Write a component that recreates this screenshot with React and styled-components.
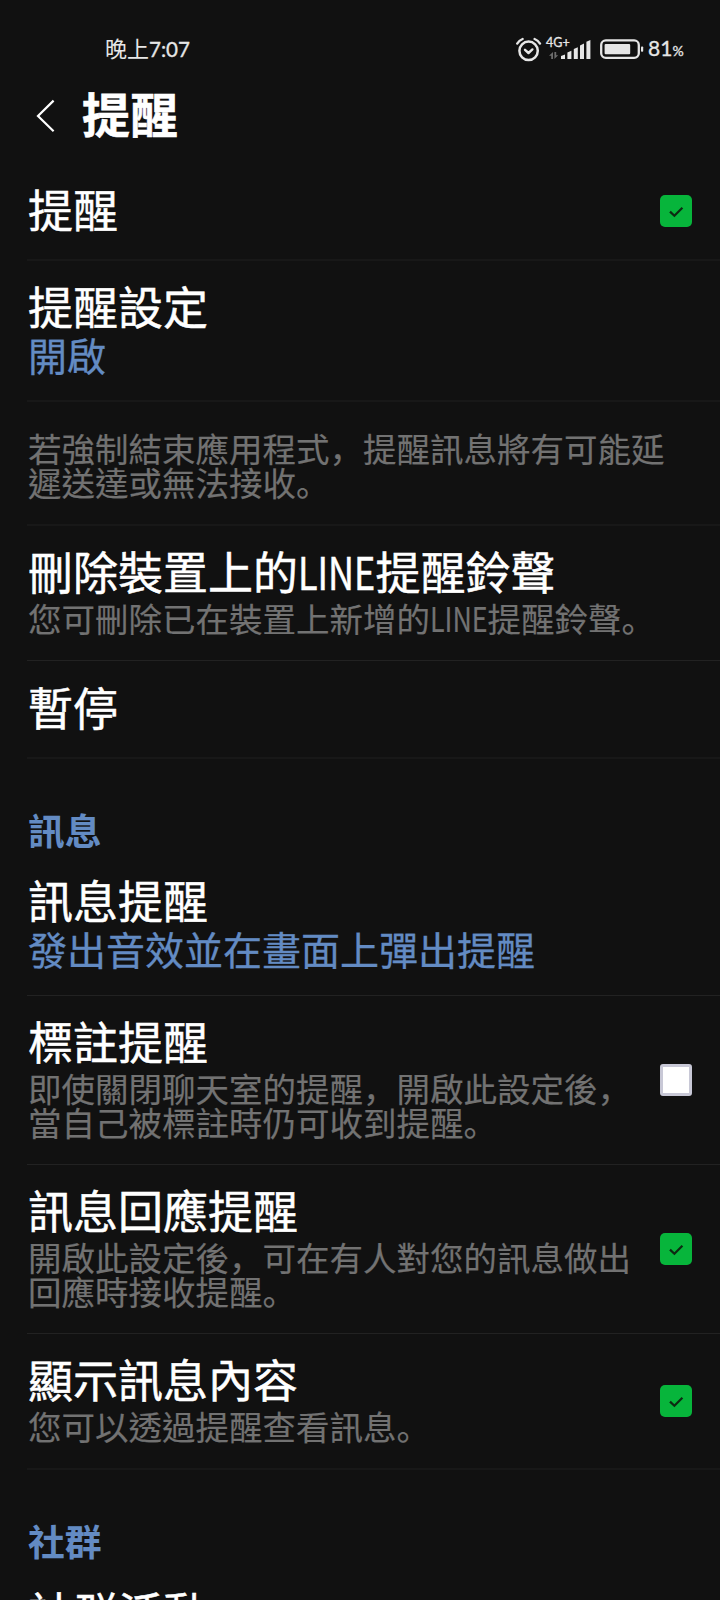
import { Fragment } from "react"
import styled, { createGlobalStyle, css } from "styled-components"

const messageRows = [
  {
    title: "訊息提醒",
    value: "發出音效並在畫面上彈出提醒",
    height: 141,
    thin: true,
  },
  {
    title: "標註提醒",
    desc: ["即使關閉聊天室的提醒，開啟此設定後，", "當自己被標註時仍可收到提醒。"],
    checked: false,
    height: 169,
    thin: true,
  },
  {
    title: "訊息回應提醒",
    desc: ["開啟此設定後，可在有人對您的訊息做出", "回應時接收提醒。"],
    checked: true,
    height: 169,
    thin: true,
  },
  {
    title: "顯示訊息內容",
    desc: ["您可以透過提醒查看訊息。"],
    checked: true,
    height: 136,
  },
]

// LINE is set narrow, punctuation sits at the lower left of its cell
const Mixed = ({ text, latin }) =>
  text.split(/(LINE|[，。])/).map((part, i) => {
    if (part === "LINE") {
      return (
        <StyledLatin key={i} $width={latin}>
          <span>{part}</span>
        </StyledLatin>
      )
    }
    if (part === "，" || part === "。") return <StyledMark key={i}>{part}</StyledMark>
    return <Fragment key={i}>{part}</Fragment>
  })

const Checkbox = ({ checked }) => (
  <StyledCheckbox $checked={checked} role="checkbox" aria-checked={checked}>
    {checked && (
      <svg width="32" height="32" viewBox="0 0 32 32" fill="none">
        <path d="M10 16.6L14.4 20.8L22.4 12.8" stroke="#0d2a12" strokeWidth="2.2" />
      </svg>
    )}
  </StyledCheckbox>
)

const SettingRow = ({ title, value, desc, checked, height, thin }) => (
  <StyledRow $height={height} $thin={thin}>
    <StyledRowText $single={!value && !desc}>
      <StyledTitle>
        <Mixed text={title} latin={77.5} />
      </StyledTitle>
      {value && <StyledValue>{value}</StyledValue>}
      {desc && desc.map((line) => (
        <StyledDesc key={line}>
          <Mixed text={line} latin={57.5} />
        </StyledDesc>
      ))}
    </StyledRowText>
    {checked !== undefined && <Checkbox checked={checked} />}
  </StyledRow>
)

const AlarmIcon = () => (
  <svg width="26" height="26" viewBox="0 0 26 26" fill="none" stroke="#e6e6e6" strokeLinecap="round">
    <circle cx="12.6" cy="14.8" r="9.2" strokeWidth="2.5" />
    <path d="M9 13.8L12.5 17L16.4 13.4" strokeWidth="2.4" strokeLinejoin="round" />
    <path d="M1.2 7.6Q3 4.4 6.6 3M24 7.6Q22.2 4.4 18.6 3" strokeWidth="2.3" />
  </svg>
)

const SignalIcon = () => (
  <svg width="44" height="22" viewBox="0 0 44 22" fill="#e6e6e6">
    <path d="M6 14v7H4.2v-3.2H2zM7.4 14v7l3.8-3.8H9.2V14z" fill="#6c6c6c" />
    <path d="M14 21v-3l4-1.6V21zM20.4 21v-6.4l4-1.8V21zM26.8 21V11l4-1.8V21zM33 21V7.4l4-1.8V21zM39.4 21V3.8l4-1.8V21z" />
  </svg>
)

const BatteryIcon = () => (
  <svg width="44" height="20" viewBox="0 0 44 20" fill="none">
    <rect x="1.2" y="1.4" width="37.6" height="17.4" rx="4.6" stroke="#e6e6e6" strokeWidth="2.3" />
    <rect x="4.6" y="5" width="25.6" height="10.2" rx="1" fill="#e6e6e6" />
    <rect x="41" y="7.4" width="2.2" height="5.4" rx="0.8" fill="#e6e6e6" />
  </svg>
)

export default function App() {
  return (
    <>
      <GlobalStyle />
      <StyledScreen>
        <StyledStatusBar>
          <StyledClock>
            晚上<span>7:07</span>
          </StyledClock>
          <StyledStatusIcons>
            <AlarmIcon />
            <StyledSignal>
              <SignalIcon />
              <StyledNetwork>4G+</StyledNetwork>
            </StyledSignal>
            <BatteryIcon />
            <StyledPercent>
              81<small>%</small>
            </StyledPercent>
          </StyledStatusIcons>
        </StyledStatusBar>

        <StyledHeader>
          <svg width="20" height="34" viewBox="0 0 20 34" fill="none">
            <path d="M17.6 1.6L2 17L17.6 32.2" stroke="#fff" strokeWidth="2.2" />
          </svg>
          <h1>提醒</h1>
        </StyledHeader>

        <SettingRow title="提醒" checked height={98} />
        <SettingRow title="提醒設定" value="開啟" height={141} />
        <StyledNotice>
          <StyledDesc><Mixed text="若強制結束應用程式，提醒訊息將有可能延" /></StyledDesc>
          <StyledDesc><Mixed text="遲送達或無法接收。" /></StyledDesc>
        </StyledNotice>
        <SettingRow
          title="刪除裝置上的LINE提醒鈴聲"
          desc={["您可刪除已在裝置上新增的LINE提醒鈴聲。"]}
          height={135}
          thin
        />
        <SettingRow title="暫停" height={98} />

        <StyledSection>訊息</StyledSection>
        {messageRows.map((row) => (
          <SettingRow key={row.title} {...row} />
        ))}

        <StyledSection>社群</StyledSection>
        <SettingRow title="社群活動" height={98} />
      </StyledScreen>
    </>
  )
}

const GlobalStyle = createGlobalStyle`
  * {
    box-sizing: border-box;
  }

  body {
    margin: 0;
    background-color: #111;
    overflow: hidden;
  }
`

const StyledScreen = styled.div`
  width: 720px;
  height: 1600px;
  overflow: hidden;
  background-color: #111;
  color: #fff;
  font-family: "Noto Sans CJK TC", sans-serif;
  white-space: nowrap;

  svg {
    display: block;
    flex-shrink: 0;
  }
`

const StyledStatusBar = styled.div`
  height: 84px;
  padding: 14px 35px 0 105px;
  display: flex;
  align-items: center;
  justify-content: space-between;
  color: #e6e6e6;
`

const StyledClock = styled.div`
  padding-bottom: 2px;
  font-size: 22px;
  line-height: 26px;

  span {
    font-family: Lato, sans-serif;
    font-size: 20.6px;
    -webkit-text-stroke: 0.3px currentColor;
  }
`

const StyledStatusIcons = styled.div`
  display: flex;
  align-items: center;
`

const StyledSignal = styled.div`
  position: relative;
  margin: 0 9px 0 5px;
`

const StyledNetwork = styled.span`
  position: absolute;
  top: -2px;
  left: -1px;
  font-family: Lato, sans-serif;
  font-size: 12.5px;
  line-height: 14px;
  -webkit-text-stroke: 0.3px currentColor;
`

const StyledPercent = styled.div`
  width: 37px;
  margin-left: 4px;
  font-family: Lato, sans-serif;
  font-size: 21px;
  line-height: 26px;
  -webkit-text-stroke: 0.3px currentColor;

  small {
    margin-left: 0;
    font-size: 14px;
  }
`

const StyledHeader = styled.div`
  height: 79px;
  padding: 0 0 16px 36px;
  display: flex;
  align-items: center;
  gap: 26px;

  h1 {
    margin: 0;
    padding-bottom: 8px;
    font-size: 48px;
    line-height: 54px;
    font-weight: 700;
    -webkit-text-stroke: 0.6px currentColor;
  }
`

const divider = css`
  border-bottom: ${({ $thin }) => ($thin ? "1px solid #222" : "2px solid #181818")};
`

const StyledRow = styled.div`
  height: ${({ $height }) => $height}px;
  margin-left: 27px;
  padding: 0 28px 0 1px;
  display: flex;
  align-items: center;
  justify-content: space-between;
  ${divider}
`

const StyledRowText = styled.div`
  align-self: flex-start;
  padding-top: ${({ $single }) => ($single ? 16 : 15)}px;
`

const StyledNotice = styled.div`
  height: 124px;
  margin-left: 27px;
  padding: 29px 0 0 1px;
  ${divider}
`

const StyledTitle = styled.div`
  font-size: 45px;
  line-height: 60px;
  -webkit-text-stroke: 0.5px currentColor;
`

const StyledValue = styled.div`
  height: 39px;
  font-size: 39px;
  line-height: 37px;
  color: #638bc3;
  -webkit-text-stroke: 0.3px currentColor;
`

const StyledDesc = styled.div`
  font-size: 33.5px;
  line-height: 34px;
  color: #727272;
  -webkit-text-stroke: 0.2px currentColor;
`

const StyledMark = styled.span`
  display: inline-block;
  font-family: "Noto Sans CJK SC", sans-serif;
`

const StyledLatin = styled.span`
  display: inline-block;
  width: ${({ $width }) => $width}px;

  span {
    display: inline-block;
    transform: scaleX(0.8);
    transform-origin: left;
  }
`

const StyledSection = styled.div`
  height: 96px;
  padding: 44px 0 0 28px;
  font-size: 36.8px;
  line-height: 52px;
  font-weight: 700;
  color: #638bc3;
`

const StyledCheckbox = styled.div`
  width: 32px;
  height: 32px;
  flex-shrink: 0;
  border-radius: ${({ $checked }) => ($checked ? "5px" : "3px")};
  background-color: ${({ $checked }) => ($checked ? "#07b53b" : "#fff")};
  border: ${({ $checked }) => ($checked ? "none" : "3px solid #c8c8d6")};
`
